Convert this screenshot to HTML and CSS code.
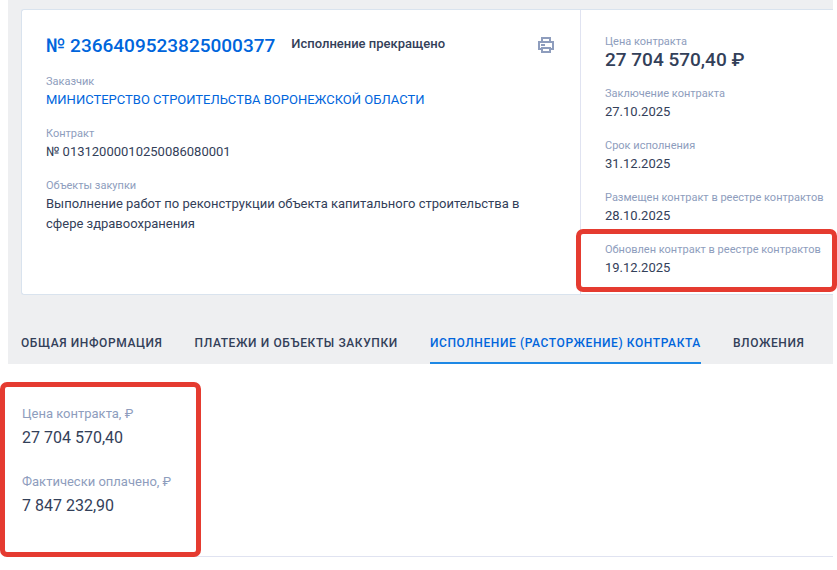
FILE: index.html
```html
<!DOCTYPE html>
<html lang="ru">
  <head>
    <meta charset="UTF-8" />
    <meta name="viewport" content="width=device-width, initial-scale=1.0" />
    <title>Контракт № 2366409523825000377</title>
    <link rel="stylesheet" href="styles.css">
  </head>
  <body>
    <header class="header">
      <div class="card">
        <div class="card-main">
          <div class="card-top">
            <a href="#" class="card-number">№ 2366409523825000377</a>
            <span class="card-status">Исполнение прекращено</span>
            <button type="button" class="print" aria-label="Печать">
              <svg width="18" height="18" viewBox="0 0 18 18" fill="none" stroke="#8e9dbd" stroke-width="2">
                <path d="M5 5V2h8v3" />
                <path d="M5 13H2V6h14v7h-3" />
                <path d="M5 12h8v4H5z" />
                <path d="M4 9h4" />
              </svg>
            </button>
          </div>
          <dl class="info">
            <div class="info-item">
              <dt>Заказчик</dt>
              <dd><a href="#">МИНИСТЕРСТВО СТРОИТЕЛЬСТВА ВОРОНЕЖСКОЙ ОБЛАСТИ</a></dd>
            </div>
            <div class="info-item">
              <dt>Контракт</dt>
              <dd>№ 01312000010250086080001</dd>
            </div>
            <div class="info-item">
              <dt>Объекты закупки</dt>
              <dd>Выполнение работ по реконструкции объекта капитального строительства в сфере здравоохранения</dd>
            </div>
          </dl>
        </div>
        <dl class="info card-side">
          <div class="info-item">
            <dt>Цена контракта</dt>
            <dd class="price">27 704 570,40 ₽</dd>
          </div>
          <div class="info-item">
            <dt>Заключение контракта</dt>
            <dd>27.10.2025</dd>
          </div>
          <div class="info-item">
            <dt>Срок исполнения</dt>
            <dd>31.12.2025</dd>
          </div>
          <div class="info-item">
            <dt>Размещен контракт в реестре контрактов</dt>
            <dd>28.10.2025</dd>
          </div>
          <div class="info-item marked marked-date">
            <dt>Обновлен контракт в реестре контрактов</dt>
            <dd>19.12.2025</dd>
          </div>
        </dl>
      </div>

      <nav class="tabs">
        <a href="#">Общая информация</a>
        <a href="#">Платежи и объекты закупки</a>
        <a href="#" class="active">Исполнение (расторжение) контракта</a>
        <a href="#">Вложения</a>
      </nav>
    </header>

    <main class="content">
      <dl class="totals marked marked-totals">
        <div>
          <dt>Цена контракта, ₽</dt>
          <dd>27 704 570,40</dd>
        </div>
        <div>
          <dt>Фактически оплачено, ₽</dt>
          <dd>7 847 232,90</dd>
        </div>
      </dl>
    </main>
  </body>
</html>
```

FILE: styles.css
```css
* {
  box-sizing: border-box;
}
body {
  margin: 0;
  padding: 0 4px 0 8px;
  font-family: Roboto, Arial, sans-serif;
  font-size: 13px;
  line-height: 20px;
  color: #334059;
  background-color: #fff;
}
a {
  color: #0065dc;
  text-decoration: none;
}
dl,
dd {
  margin: 0;
}
.header {
  padding: 9px 0 0 13px;
  background-color: #eeeff1;
}
.card {
  display: flex;
  border: 1px solid #d9e3ee;
  border-right: 0;
  border-radius: 3px 0 0 3px;
  background-color: #fff;
}
.card-main {
  flex: 1;
  padding: 24px 24px 16px;
}
.card-side {
  flex: none;
  width: 253px;
  padding: 24px 0 16px 24px;
  border-left: 1px solid #e0e3f1;
}
.card-top {
  display: flex;
  align-items: flex-start;
  margin-bottom: 16px;
}
.card-number {
  font-size: 19px;
  font-weight: 500;
  line-height: 24px;
}
.card-status {
  margin-left: 16px;
  font-weight: 500;
}
.print {
  display: flex;
  margin-left: auto;
  padding: 2px 1px;
  border: 0;
  background: none;
  cursor: pointer;
}
.info {
  display: flex;
  flex-direction: column;
  gap: 16px;
}
.info dt {
  font-size: 11px;
  line-height: 16px;
  color: #8e9dbd;
  white-space: nowrap;
}
.info .price {
  font-size: 19px;
  font-weight: 500;
}
.tabs {
  display: flex;
  gap: 32px;
  margin-top: 38px;
}
.tabs a {
  padding-bottom: 9px;
  border-bottom: 2px solid transparent;
  font-size: 12px;
  font-weight: 500;
  letter-spacing: 0.05em;
  text-transform: uppercase;
  white-space: nowrap;
  color: #334059;
}
.tabs .active {
  border-color: #1e88e5;
  color: #0065dc;
}
.content {
  padding: 40px 14px 38px;
  border-bottom: 1px solid #e0e3f1;
}
.totals {
  display: flex;
  flex-direction: column;
  gap: 22px;
  width: fit-content;
}
.totals dt {
  margin-bottom: 2px;
  color: #8e9dbd;
}
.totals dd {
  font-size: 16px;
  line-height: 24px;
}

/* red frames around the important values */
.marked {
  position: relative;
}
.marked::after {
  content: "";
  position: absolute;
  border: 5px solid #e53b30;
  border-radius: 7px;
  pointer-events: none;
}
.marked-date::after {
  top: -13px;
  right: -4px;
  bottom: -14px;
  left: -29px;
}
.marked-totals::after {
  top: -22px;
  right: -30px;
  bottom: -39px;
  left: -22px;
}
```
